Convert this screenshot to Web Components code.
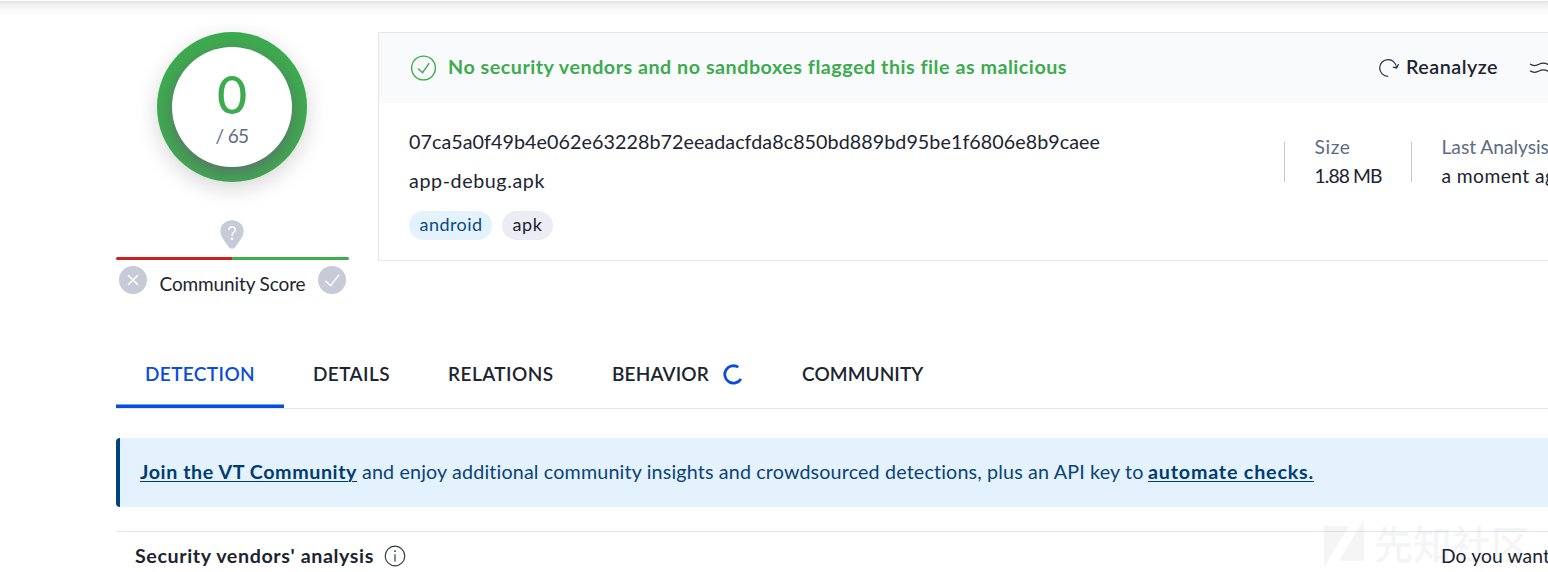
<!DOCTYPE html>
<html lang="en">
<head>
<meta charset="utf-8">
<title>File report</title>
<style>
html,body{margin:0;height:572px;overflow:hidden;background:#fff}
body{font-family:Lato,"Open Sans","Liberation Sans",sans-serif;font-size:19.7px;line-height:24px;color:#20242f}
</style>
</head>
<body>
<file-report></file-report>
<script>
const define = (name, html, setup) => {
  const t = document.createElement('template');
  t.innerHTML = html;
  customElements.define(name, class extends HTMLElement {
    constructor() {
      super();
      this.attachShadow({mode: 'open'}).appendChild(t.content.cloneNode(true));
    }
    connectedCallback() { if (setup) setup(this, this.shadowRoot); }
  });
};

define('file-report', `<style>
:host{display:block;position:relative;width:1548px;height:572px;overflow:hidden;background:#fff}
.top{height:32px;background:linear-gradient(#fbfbfc 0 1px,#e2e3e4 1px,#f1f1f1 5px,#fafafa 10px,#fff 17px)}
.summary{display:grid;grid-template-columns:233px 1fr;column-gap:29px;padding-left:116px;height:309px}
report-tabs,vt-banner,vendor-head{margin-left:116px}
vt-banner{margin-top:29px}
vendor-head{margin-top:24px}
</style>
<div class="top"></div>
<div class="summary"><score-panel></score-panel><file-card></file-card></div>
<report-tabs></report-tabs><vt-banner></vt-banner><vendor-head></vendor-head><site-mark></site-mark>`);

define('score-panel', `<style>
:host{display:flex;flex-direction:column;align-items:flex-start}
.ring{margin-left:41px;width:150px;height:150px;border-radius:50%;background:#3dab4f;display:grid;place-items:center;box-shadow:0 6px 22px rgba(0,0,0,.17)}
.clip{width:150px;height:150px;border-radius:50%;overflow:hidden;display:grid;place-items:center}
.disc{width:120px;height:120px;border-radius:50%;background:#fff;box-shadow:0 6px 17px 0 rgba(100,96,114,.8);display:flex;flex-direction:column;align-items:center}
.n{margin:18px 0 0 3px;height:59px;line-height:59px;font-size:52px;color:#3dab4f;font-weight:500}
.of{color:#5d6b83;height:24px;font-size:19px}
.pin{margin:38px 0 0 104px;display:block}
.bar{margin-top:8px;width:233px;height:3px;border-radius:2px;background:linear-gradient(90deg,#c9211e 50%,#3dae4e 50%)}
.row{display:flex;width:227px;margin:6px 0 0 3px;justify-content:space-between}
.row vt-text{margin-top:6px;font-size:19px}
svg{display:block}
</style>
<div class="ring"><div class="clip"><div class="disc">
<vt-text class="n" w="33">0</vt-text><vt-text class="of" w="33">/ 65</vt-text></div></div></div>
<svg class="pin" width="24" height="29" viewBox="0 0 24 29"><path d="M12 .3C5.600.3.4 4.900.4 10.900c0 4.700 3.200 8.300 5.800 12.600l2.900 3.900c1.500 1.600 4.300 1.600 5.800 0l2.900-3.900c2.600-4.300 5.800-7.900 5.800-12.600C23.600 4.900 18.400.3 12 .3z" fill="#c7cbd8"/><path d="M8.900 10c.1-4.300 6.500-4.200 6.500-.3 0 2.700-3.300 2.500-3.300 5.700v.6" fill="none" stroke="#fff" stroke-width="1.500"/><circle cx="12" cy="18.700" r="1.200" fill="#fff"/></svg>
<div class="bar"></div>
<div class="row">
<svg width="28" height="28" viewBox="0 0 28 28"><circle cx="14" cy="14" r="14" fill="#c7cbd8"/><path d="M9 9l10 10M19 9L9 19" stroke="#fff" stroke-width="1.500"/></svg>
<vt-text w="146">Community Score</vt-text>
<svg width="28" height="28" viewBox="0 0 28 28"><circle cx="14" cy="14" r="14" fill="#c7cbd8"/><path d="M7.400 14.800l5.200 4.900L21 8.700" fill="none" stroke="#fff" stroke-width="1.500"/></svg>
</div>`);

define('file-card', `<style>
:host{display:block;box-sizing:border-box;height:229px;border:1px solid #e1e7f0;border-right:0;overflow:hidden;white-space:nowrap}
header{height:70px;background:#f9fafc;display:flex;align-items:flex-start;padding-left:32px}
header svg{flex:none}
.ok{margin-top:22px;margin-left:-.5px}
.title{margin:22px 0 0 11.5px;color:#3dab4f;font-weight:700}
.again{margin:25px 0 0 311px}
.re{margin:22px 0 0 6px;font-weight:600}
.wave{margin:28px 0 0 31px}
.body{display:flex;padding-left:30px}
.id{flex:none;width:875px;padding-top:27px;display:flex;flex-direction:column;align-items:flex-start}
.name{margin-top:15px}
.tags{display:flex;gap:10px;margin-top:18px}
.meta{display:flex;flex:none;margin-top:39px}
file-stat:first-child{width:127px}
</style>
<header>
<svg class="ok" width="26" height="26" viewBox="0 0 26 26" fill="none" stroke="#3dab4f" stroke-width="1.400"><circle cx="12.500" cy="13" r="11.900"/><path d="M6.900 13.500l4.700 4.200 6.600-9.500"/></svg>
<vt-text class="title" w="619">No security vendors and no sandboxes flagged this file as malicious</vt-text>
<svg class="again" width="22" height="20" viewBox="0 0 22 20" fill="none" stroke="#292d38" stroke-width="1.200"><path d="M10.200 18.300C5.400 18.300 1.700 14.600 1.700 9.900S5.400 1.600 10.200 1.600c4.300 0 7.900 3.200 8.300 8.100M14.800 9.100l3.900 1 1.800-4"/></svg>
<vt-text class="re" w="92">Reanalyze</vt-text>
<svg class="wave" width="24" height="14" viewBox="0 0 24 14" fill="none" stroke="#292d38" stroke-width="1.200"><path d="M1 3c3 2 6 2 9 .3s6-1.500 9 .2 3 0 4 0M1 9.800c3 2 6 2 9 .3s6-1.500 9 .2 3 0 4 0"/></svg>
</header>
<div class="body"><div class="id">
<vt-text w="691">07ca5a0f49b4e062e63228b72eeadacfda8c850bd889bd95be1f6806e8b9caee</vt-text>
<vt-text class="name" w="136">app-debug.apk</vt-text>
<div class="tags"><file-tag style="--bg:#e3f2fd;--fg:#0b4a85;--w:83px"><vt-text w="63">android</vt-text></file-tag><file-tag style="--bg:#ebecf4;--fg:#20242f;--w:51px"><vt-text w="30">apk</vt-text></file-tag></div>
</div><div class="meta">
<file-stat><vt-text slot="label" w="36">Size</vt-text><vt-text w="67">1.88 MB</vt-text></file-stat>
<file-stat><vt-text slot="label" w="153">Last Analysis Date</vt-text><vt-text w="125">a moment ago</vt-text></file-stat>
</div></div>`);

define('file-tag', `<style>:host{display:flex;box-sizing:border-box;width:var(--w);height:29px;padding:1px 0 0 10.500px;border-radius:15px;background:var(--bg);color:var(--fg);font-size:18px}</style><slot></slot>`);

define('file-stat', `<style>
:host{display:flex;flex:none;font-size:19.300px}
.rule{width:1px;height:40px;background:#c4c6c9;margin-right:29.500px}
.text{margin-top:-7px}
.label{height:29px;color:#5d6b83}
</style><div class="rule"></div><div class="text"><div class="label"><slot name="label"></slot></div><slot></slot></div>`);

define('report-tabs', `<style>
:host{display:flex;height:67px;border-bottom:1px solid #e1e7f0}
</style>
<report-tab active style="--w:168px"><vt-text w="110">DETECTION</vt-text></report-tab>
<report-tab style="--w:135px"><vt-text w="77">DETAILS</vt-text></report-tab>
<report-tab style="--w:164px"><vt-text w="105.5">RELATIONS</vt-text></report-tab>
<report-tab style="--w:189px"><vt-text w="97">BEHAVIOR</vt-text><svg width="22" height="22" viewBox="0 0 22 22" style="margin:1px 0 0 12.500px;flex:none"><path d="M16.300 4.200A8.700 8.700 0 1 0 18.900 16" fill="none" stroke="#0b4dda" stroke-width="2.800"/></svg></report-tab>
<report-tab style="--w:180px"><vt-text w="121.5" style="margin-left:1px">COMMUNITY</vt-text></report-tab>`);

define('report-tab', `<style>
:host{display:flex;align-items:flex-start;box-sizing:border-box;width:var(--w);height:67px;padding:21px 0 0 29px;font-weight:600;font-size:19px}
:host([active]){color:#0b4dda;background:linear-gradient(#7da1ec 0 1px,#0b4dda 1px) bottom/100% 4px no-repeat}
</style><slot></slot>`);

define('vt-banner', `<style>
:host{display:flex;box-sizing:border-box;height:69px;padding:22px 0 0 24px;background:linear-gradient(90deg,#00427f 4px,#e3f2fd 4px);border-radius:4px 0 0 4px;color:#0b4278;white-space:pre}
.l{color:#003c71;font-weight:700;text-decoration:underline;text-decoration-thickness:1px;text-underline-offset:2px}
.m{margin-left:5px;margin-right:4.500px}
</style><vt-text class="l" w="217">Join the VT Community</vt-text><vt-text class="m" w="781.5">and enjoy additional community insights and crowdsourced detections, plus an API key to</vt-text><vt-text class="l" w="166">automate checks.</vt-text>`);

define('vendor-head', `<style>
:host{display:flex;border-top:1px solid #e1e7ee;height:40px;padding:12px 0 0 19px;white-space:nowrap}
.h{font-weight:700}
svg{margin:1px 0 0 10.500px;flex:none}
.q{margin-left:1034.500px;font-size:19.300px}
</style><vt-text class="h" w="239">Security vendors' analysis</vt-text>
<svg width="22" height="22" viewBox="0 0 22 22"><circle cx="11" cy="11" r="9.800" fill="none" stroke="#353942" stroke-width="1.200"/><path d="M11 9.300v7.200" stroke="#353942" stroke-width="1.200"/><circle cx="11" cy="6.200" r=".9" fill="#353942"/></svg>
<vt-text class="q" w="109">Do you want</vt-text>`);

define('site-mark', `<style>
:host{position:absolute;left:1324px;top:518px;display:flex;opacity:.036;color:#000;pointer-events:none}
span{font:500 39px/48px "Noto Sans CJK SC",sans-serif;margin:0 0 0 9px;white-space:nowrap}
svg{flex:none}
</style><svg width="41" height="50" viewBox="0 0 41 50"><path d="M0 8h25L0 49zM40 1v42H15z"/></svg><span>先知社区</span>`);

/* Text run whose tracking is adjusted to the width given in its "w" attribute. */
define('vt-text', `<style>:host{display:block;flex:none;white-space:nowrap;font-variant-ligatures:none}span{display:inline-block;text-decoration:inherit}</style><span><slot></slot></span>`, (el, root) => {
  const want = +el.getAttribute('w');
  const span = root.querySelector('span');
  const n = el.textContent.length;
  const ls = (want - span.getBoundingClientRect().width) / n;
  span.style.letterSpacing = ls.toFixed(3) + 'px';
});
</script>
</body>
</html>
